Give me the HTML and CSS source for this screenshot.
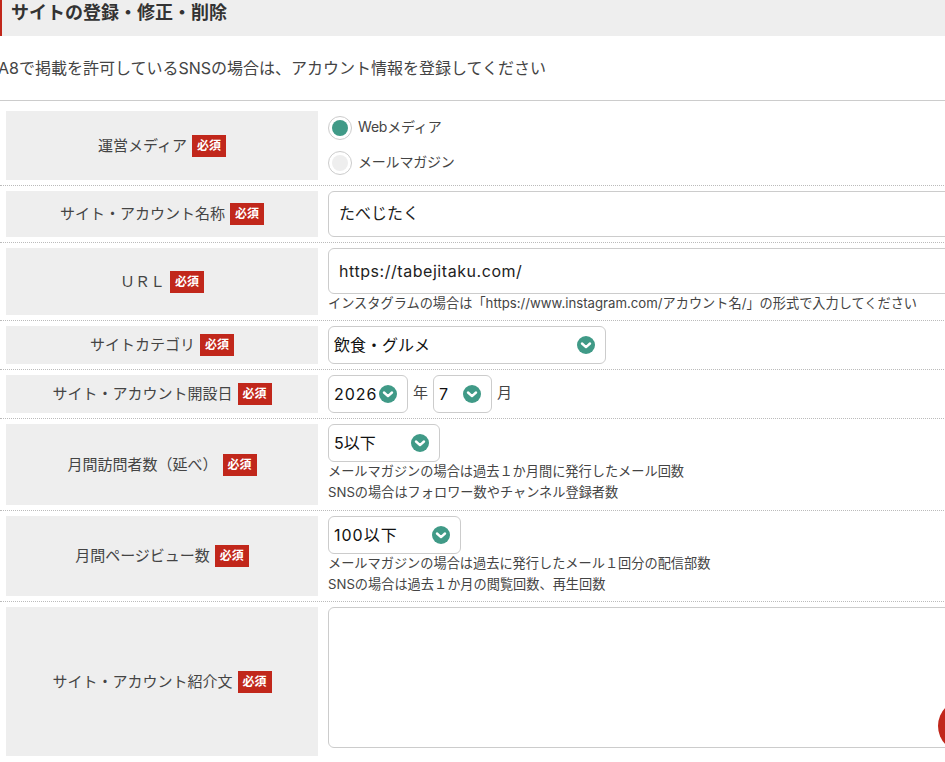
FILE: index.html
```html
<!DOCTYPE html>
<html lang="ja">
<head>
  <meta charset="UTF-8" />
  <meta name="viewport" content="width=device-width, initial-scale=1.0"/>
  <title>サイトの登録・修正・削除</title>
  <link rel="stylesheet" href="styles.css">
</head>
<body>
  <h1 class="page-title">サイトの登録・修正・削除</h1>
  <p class="notice">A8で掲載を許可しているSNSの場合は、アカウント情報を登録してください</p>

  <form class="site-form">
    <div class="row row-first">
      <div class="label-cell"><span>運営メディア</span><em class="required">必須</em></div>
      <div class="field-cell">
        <label class="radio"><input type="radio" name="media" checked /><span>Webメディア</span></label>
        <label class="radio"><input type="radio" name="media" /><span>メールマガジン</span></label>
      </div>
    </div>

    <div class="row">
      <div class="label-cell"><span>サイト・アカウント名称</span><em class="required">必須</em></div>
      <div class="field-cell">
        <input class="text-input text-input-name" type="text" value="たべじたく" />
      </div>
    </div>

    <div class="row">
      <div class="label-cell"><span>ＵＲＬ</span><em class="required">必須</em></div>
      <div class="field-cell">
        <input class="text-input text-input-url" type="text" value="https://tabejitaku.com/" />
        <p class="note">インスタグラムの場合は「https://www.instagram.com/アカウント名/」の形式で入力してください</p>
      </div>
    </div>

    <div class="row">
      <div class="label-cell"><span>サイトカテゴリ</span><em class="required">必須</em></div>
      <div class="field-cell">
        <div class="select select-category">
          <select><option>飲食・グルメ</option></select>
          <svg class="select-arrow" viewBox="0 0 18 18"><circle cx="9" cy="9" r="9"/><path d="M5 7.5l4 3.6 4-3.6"/></svg>
        </div>
      </div>
    </div>

    <div class="row">
      <div class="label-cell"><span>サイト・アカウント開設日</span><em class="required">必須</em></div>
      <div class="field-cell date-fields">
        <div class="select select-year">
          <select><option>2026</option></select>
          <svg class="select-arrow" viewBox="0 0 18 18"><circle cx="9" cy="9" r="9"/><path d="M5 7.5l4 3.6 4-3.6"/></svg>
        </div>
        <span class="unit">年</span>
        <div class="select select-month">
          <select><option>7</option></select>
          <svg class="select-arrow" viewBox="0 0 18 18"><circle cx="9" cy="9" r="9"/><path d="M5 7.5l4 3.6 4-3.6"/></svg>
        </div>
        <span class="unit">月</span>
      </div>
    </div>

    <div class="row row-visitors">
      <div class="label-cell"><span>月間訪問者数（延べ）</span><em class="required">必須</em></div>
      <div class="field-cell">
        <div class="select select-visitors">
          <select><option>5以下</option></select>
          <svg class="select-arrow" viewBox="0 0 18 18"><circle cx="9" cy="9" r="9"/><path d="M5 7.5l4 3.6 4-3.6"/></svg>
        </div>
        <p class="note">メールマガジンの場合は過去１か月間に発行したメール回数<br>SNSの場合はフォロワー数やチャンネル登録者数</p>
      </div>
    </div>

    <div class="row">
      <div class="label-cell"><span>月間ページビュー数</span><em class="required">必須</em></div>
      <div class="field-cell">
        <div class="select select-views">
          <select><option>100以下</option></select>
          <svg class="select-arrow" viewBox="0 0 18 18"><circle cx="9" cy="9" r="9"/><path d="M5 7.5l4 3.6 4-3.6"/></svg>
        </div>
        <p class="note">メールマガジンの場合は過去に発行したメール１回分の配信部数<br>SNSの場合は過去１か月の閲覧回数、再生回数</p>
      </div>
    </div>

    <div class="row row-last">
      <div class="label-cell"><span>サイト・アカウント紹介文</span><em class="required">必須</em></div>
      <div class="field-cell">
        <textarea class="text-area"></textarea>
      </div>
    </div>
  </form>

  <div class="float-button"></div>
</body>
</html>
```

FILE: styles.css
```css
html, body {
  overflow: hidden;
}

body {
  font-family: Inter, "Noto Sans CJK JP", sans-serif;
  background-color: #fff;
  color: #444;
  margin: 0;
  width: 945px;
  height: 762px;
}

.page-title {
  margin: 0;
  padding: 1px 0 11px 9px;
  height: 36px;
  box-sizing: border-box;
  width: 1000px;
  background-color: #eee;
  border-left: 2px solid #c1271b;
  color: #333;
  font-size: 18px;
  font-weight: bold;
  line-height: 24px;
}

.notice {
  margin: 0 0 0 -2px;
  padding: 20px 0;
  font-size: 16px;
  line-height: 24px;
  color: #444;
}

.site-form {
  width: 1000px;
  border-top: 1px solid #ccc;
}

.row {
  display: grid;
  grid-template-columns: 312px 1fr;
  column-gap: 10px;
  padding: 5px 0 5px 6px;
  border-bottom: 1px dotted #bbb;
}

.row-first {
  padding-top: 10px;
}

.row-last {
  padding-bottom: 0;
  border-bottom: none;
}

.label-cell {
  display: flex;
  align-items: center;
  justify-content: center;
  background-color: #eee;
  font-size: 15px;
  line-height: 22px;
  color: #444;
}

.required {
  margin-left: 5px;
  width: 34px;
  height: 22px;
  flex: none;
  background-color: #c1271b;
  color: #fff;
  font-size: 12px;
  font-weight: bold;
  font-style: normal;
  line-height: 22px;
  text-align: center;
}

.radio {
  display: flex;
  align-items: center;
  height: 24px;
  margin: 5px 0 11px;
  font-size: 14px;
  letter-spacing: -0.2px;
}

.radio span {
  padding-bottom: 5px;
}

.radio + .radio {
  margin-bottom: 5px;
}

.radio input {
  appearance: none;
  margin: 0 6px 0 0;
  width: 24px;
  height: 24px;
  border: 1px solid #ccc;
  border-radius: 50%;
  background-color: #eee;
  background-clip: content-box;
  padding: 3px;
  box-sizing: border-box;
}

.radio input:checked {
  background-color: #409a87;
}

.text-input {
  display: block;
  box-sizing: border-box;
  width: 100%;
  height: 46px;
  padding: 0 10px 1px;
  border: 1px solid #ccc;
  border-radius: 6px;
  background-color: #fff;
  color: #222;
  font-family: inherit;
  font-size: 16px;
}

.text-input-name {
  padding-bottom: 4px;
}

.text-input-url {
  letter-spacing: 0.55px;
}

.note {
  margin: -1px 0 1px;
  font-size: 13.2px;
  line-height: 21px;
  color: #444;
}

.row-visitors .note {
  margin-bottom: 2px;
}

.select {
  position: relative;
  height: 38px;
  box-sizing: border-box;
}

.select select {
  appearance: none;
  display: block;
  width: 100%;
  height: 100%;
  padding: 0 5px;
  border: 1px solid #ccc;
  border-radius: 6px;
  background-color: #fff;
  color: #111;
  font-family: inherit;
  font-size: 16px;
}

.select-arrow {
  position: absolute;
  top: 10px;
  right: 11px;
  width: 18px;
  height: 18px;
  pointer-events: none;
}

.select-arrow circle {
  fill: #409a87;
}

.select-arrow path {
  fill: none;
  stroke: #fff;
  stroke-width: 2.4;
  stroke-linecap: round;
  stroke-linejoin: round;
}

.select-category { width: 278px; }
.select-year { width: 80px; }
.select-month { width: 59px; }
.select-visitors { width: 112px; }
.select-views { width: 133px; }

.select-year select,
.select-views select {
  letter-spacing: 1px;
}

.date-fields {
  display: flex;
  align-items: flex-start;
  gap: 5px;
}

.unit {
  font-size: 15px;
  line-height: 35px;
  color: #444;
}

.text-area {
  display: block;
  box-sizing: border-box;
  width: 100%;
  height: 141px;
  margin-bottom: 8px;
  border: 1px solid #ccc;
  border-radius: 6px;
  background-color: #fff;
  resize: none;
}

.float-button {
  position: fixed;
  left: 938px;
  top: 699px;
  width: 54px;
  height: 54px;
  border-radius: 50%;
  background-color: #c1271b;
}
```
